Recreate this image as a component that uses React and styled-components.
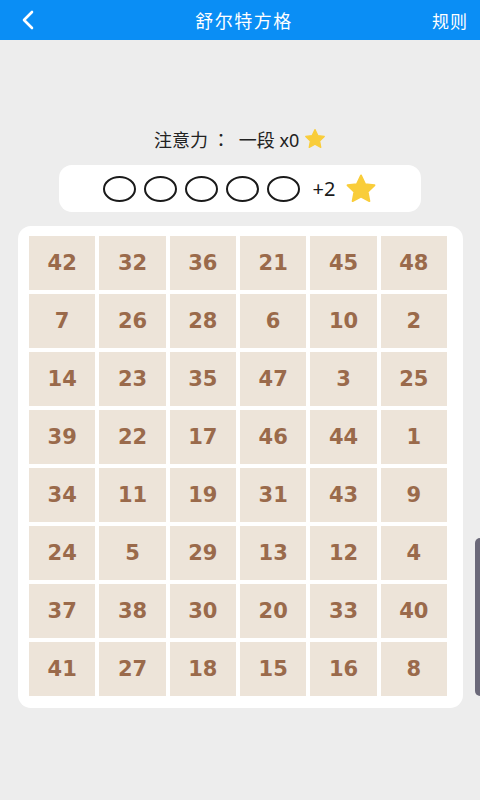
import styled, { createGlobalStyle } from "styled-components";

const GlobalStyle = createGlobalStyle`
  html, body {
    margin: 0;
    padding: 0;
    background: #ededed;
    font-family: "Noto Sans", "Noto Sans CJK SC", sans-serif;
  }
`;

const numbers = [
  42, 32, 36, 21, 45, 48,
  7, 26, 28, 6, 10, 2,
  14, 23, 35, 47, 3, 25,
  39, 22, 17, 46, 44, 1,
  34, 11, 19, 31, 43, 9,
  24, 5, 29, 13, 12, 4,
  37, 38, 30, 20, 33, 40,
  41, 27, 18, 15, 16, 8,
];

const Star = ({ size }) => (
  <svg width={size} height={size} viewBox="0 0 24 24">
    <path
      d="M12 1.8l3.1 6.5 7 .9-5.1 4.9 1.3 7-6.3-3.4-6.3 3.4 1.3-7L1.9 9.2l7-.9z"
      fill="#f9cd3a"
      stroke="#f9cd3a"
      strokeWidth="1.4"
      strokeLinejoin="round"
    />
  </svg>
);

const App = () => {
  return (
    <Page>
      <GlobalStyle />
      <Header>
        <BackButton>
          <svg width="16" height="20" viewBox="0 0 16 20">
            <path
              d="M12 2L4 10l8 8"
              fill="none"
              stroke="#fff"
              strokeWidth="2.6"
              strokeLinecap="round"
              strokeLinejoin="round"
            />
          </svg>
        </BackButton>
        <Title>舒尔特方格</Title>
        <RuleLink>规则</RuleLink>
      </Header>

      <Level>
        注意力<Colon>：</Colon> 一段 x0 <Star size={22} />
      </Level>

      <RewardBox>
        {[0, 1, 2, 3, 4].map((i) => (
          <Ring key={i} />
        ))}
        <Bonus>+2</Bonus>
        <Star size={32} />
      </RewardBox>

      <Board>
        <Grid>
          {numbers.map((n) => (
            <Cell key={n}>{n}</Cell>
          ))}
        </Grid>
      </Board>

      <SideTab />
    </Page>
  );
};

const Page = styled.div`
  position: relative;
  width: 480px;
  height: 800px;
  background: #ededed;
  overflow: hidden;
`;

const Header = styled.div`
  height: 40px;
  background: #0a8ef5;
  display: flex;
  align-items: center;
  justify-content: space-between;
  padding: 0 12px 0 20px;
  color: #fff;
`;

const BackButton = styled.div`
  width: 40px;
  display: flex;
  align-items: center;
`;

const Title = styled.div`
  font-size: 18px;
  letter-spacing: 1.5px;
`;

const RuleLink = styled.div`
  width: 40px;
  text-align: right;
  font-size: 17px;
  letter-spacing: 1px;
`;

const Level = styled.div`
  margin-top: 87px;
  height: 24px;
  display: flex;
  align-items: center;
  justify-content: center;
  font-size: 18px;
  color: #222;
  white-space: pre;
`;

const Colon = styled.span`
  font-family: "Noto Sans CJK JP", sans-serif;
  margin: 0 4px;
`;

const RewardBox = styled.div`
  margin: 14px auto 0;
  width: 362px;
  height: 47px;
  background: #fff;
  border-radius: 13px;
  display: flex;
  align-items: center;
  justify-content: center;
  gap: 8px;
`;

const Ring = styled.span`
  width: 29px;
  height: 22px;
  border: 2px solid #1a1a1a;
  border-radius: 50%;
`;

const Bonus = styled.span`
  margin-left: 5px;
  margin-right: 2px;
  font-size: 20px;
  color: #1a1a1a;
`;

const Board = styled.div`
  margin: 14px 0 0 18px;
  width: 445px;
  box-sizing: border-box;
  padding: 10px 16px 12px 11px;
  background: #fff;
  border-radius: 13px;
`;

const Grid = styled.div`
  display: grid;
  grid-template-columns: repeat(6, 1fr);
  grid-auto-rows: 54px;
  gap: 4px;
`;

const Cell = styled.div`
  background: #ede4d9;
  display: flex;
  align-items: center;
  justify-content: center;
  font-family: "DejaVu Sans", Verdana, sans-serif;
  font-weight: bold;
  font-size: 21px;
  color: #9a6a4b;
`;

const SideTab = styled.div`
  position: absolute;
  right: -6px;
  top: 538px;
  width: 11px;
  height: 158px;
  border-radius: 5px;
  background: #6b6979;
`;

export default App;
